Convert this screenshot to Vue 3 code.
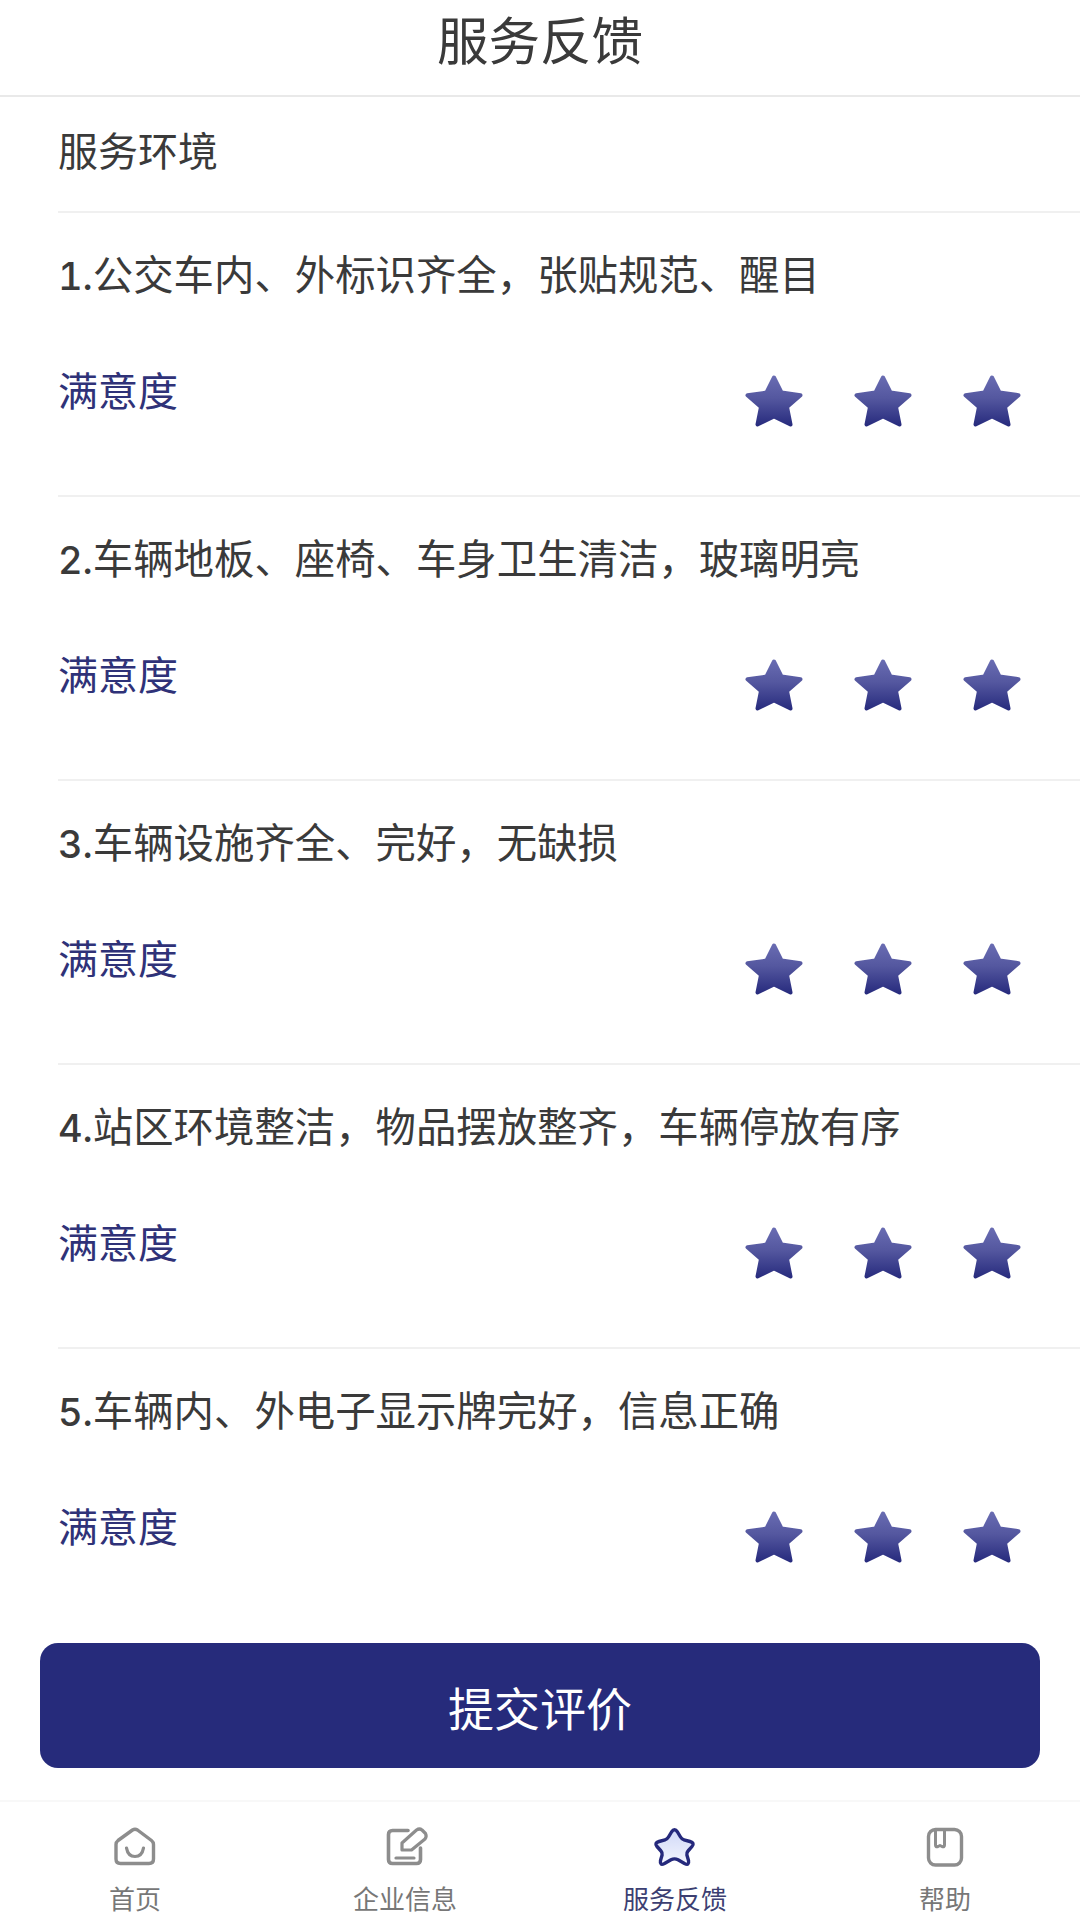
<script setup>
const rows = [
  '公交车内、外标识齐全，张贴规范、醒目',
  '车辆地板、座椅、车身卫生清洁，玻璃明亮',
  '车辆设施齐全、完好，无缺损',
  '站区环境整洁，物品摆放整齐，车辆停放有序',
  '车辆内、外电子显示牌完好，信息正确'
]
const tabs = [
  { key: 'home', label: '首页' },
  { key: 'edit', label: '企业信息' },
  { key: 'star', label: '服务反馈', active: true },
  { key: 'book', label: '帮助' }
]
const stars = [1, 2, 3]
</script>

<template>
  <div class="page">
    <svg class="defs" width="0" height="0" aria-hidden="true">
      <defs>
        <linearGradient id="starFill" gradientUnits="userSpaceOnUse" x1="0" y1="0" x2="0" y2="52">
          <stop offset="0" stop-color="#6a6db3" />
          <stop offset="0.45" stop-color="#54579f" />
          <stop offset="1" stop-color="#25297c" />
        </linearGradient>
        <linearGradient id="tabStarFill" x1="0" y1="0" x2="0" y2="1">
          <stop offset="0" stop-color="#d0d8f7" />
          <stop offset="1" stop-color="#f3f5fe" />
        </linearGradient>
      </defs>
    </svg>
    <header class="header">服务反馈</header>
    <main class="content">
      <div class="section">服务环境</div>
      <section v-for="(row, i) in rows" :key="i" class="row" :class="{ last: i === rows.length - 1 }">
        <div class="question"><span class="num">{{ i + 1 }}.</span>{{ row }}</div>
        <div class="rate">
          <span class="rate-label">满意度</span>
          <div class="stars">
            <svg v-for="s in stars" :key="s" class="star" viewBox="0 0 58 52">
              <path
                d="M29 2.5 L36.6 17.6 L55.5 20.2 L42 32 L45.5 49.5 L29 41.5 L12.5 49.5 L16 32 L2.5 20.2 L21.4 17.6 Z"
                fill="url(#starFill)"
                stroke="url(#starFill)"
                stroke-width="4"
                stroke-linejoin="round"
              />
            </svg>
          </div>
        </div>
      </section>
      <button class="submit" type="button">提交评价</button>
    </main>
    <nav class="tabbar">
      <div v-for="t in tabs" :key="t.key" class="tab" :class="{ active: t.active }">
        <svg class="tab-icon" viewBox="0 0 44 40" fill="none">
          <template v-if="t.key === 'home'">
            <path d="M5 14.5 L19.5 4 Q22 2.4 24.5 4 L38.5 14.5 Q40.5 16 40.5 18.5 V33 Q40.5 37.5 36 37.5 H7.5 Q3 37.5 3 33 V18.5 Q3 16 5 14.5 Z" stroke="#8d8d8d" stroke-width="3.4" stroke-linejoin="round" />
            <path d="M13.5 22 Q15 30.5 22 30.5 Q29 30.5 30.5 22" stroke="#8d8d8d" stroke-width="3.2" stroke-linecap="round" />
          </template>
          <template v-else-if="t.key === 'edit'">
            <path d="M25 4.5 H9.5 Q5.5 4.5 5.5 8.5 V33.5 Q5.5 37.5 9.5 37.5 H33.5 Q37.5 37.5 37.5 33.5 V22" stroke="#8d8d8d" stroke-width="3.6" stroke-linecap="round" />
            <path d="M19 24 V17 L33.5 4 Q36.5 2 39 4 L42.5 7.5 Q44 10.5 42 13 L28.5 24 Z" stroke="#8d8d8d" stroke-width="3.2" stroke-linejoin="round" />
            <path d="M13 32 H31" stroke="#8d8d8d" stroke-width="3.2" stroke-linecap="round" />
          </template>
          <template v-else-if="t.key === 'star'">
            <path d="M18.5 6 Q21.5 1.5 24.5 6 L27.5 11 Q28.8 13.2 31 13.8 L37 15.5 Q42 17 39 20.5 L35 25 Q33.5 26.6 33.9 29 L35.5 34.5 Q36.5 40 31.5 37.5 L25 33.8 Q21.5 32 18 33.8 L11.5 37.5 Q6.5 40 7.5 34.5 L9.1 29 Q9.5 26.6 8 25 L4 20.5 Q1 17 6 15.5 L12 13.8 Q14.2 13.2 15.5 11 Z" fill="url(#tabStarFill)" stroke="#25297c" stroke-width="3.4" stroke-linejoin="round" />
          </template>
          <template v-else>
            <rect x="5.5" y="3.5" width="33" height="35.5" rx="7" stroke="#8d8d8d" stroke-width="3.4" />
            <path d="M12.5 4 V19 Q12.5 21.5 15 20.5 L17 19.5 L19 20.5 Q21.5 21.5 21.5 19 V4" stroke="#8d8d8d" stroke-width="3" stroke-linejoin="round" />
          </template>
        </svg>
        <span class="tab-label">{{ t.label }}</span>
      </div>
    </nav>
  </div>
</template>

<style scoped>
.page {
  width: 1080px;
  height: 1920px;
  display: flex;
  flex-direction: column;
  background: #fff;
  overflow: hidden;
  color: #3a3a3a;
  font-family: "Noto Sans CJK SC", "Noto Sans", sans-serif;
}
.defs {
  position: absolute;
}
.header {
  height: 95px;
  line-height: 75px;
  text-align: center;
  font-size: 51.5px;
  border-bottom: 2px solid #e9e9e9;
  flex: none;
}
.content {
  flex: 1;
  display: flex;
  flex-direction: column;
  min-height: 0;
}
.section {
  margin-left: 58px;
  padding: 30px 0 40px;
  font-size: 40px;
  line-height: 44px;
  border-bottom: 2px solid #f0f0f0;
}
.row {
  margin-left: 58px;
  padding: 38px 0 68px;
  border-bottom: 2px solid #f0f0f0;
}
.row.last {
  border-bottom: 0;
}
.question {
  font-size: 40.4px;
  line-height: 44px;
}
.num {
  font-family: Inter, "Liberation Sans", sans-serif;
  font-weight: 500;
  font-size: 38px;
  line-height: 1;
  font-variant-numeric: tabular-nums;
}
.rate {
  display: flex;
  justify-content: space-between;
  align-items: flex-start;
  margin-top: 72px;
  padding-right: 59px;
}
.rate-label {
  font-size: 40px;
  line-height: 44px;
  color: #2f3278;
}
.stars {
  display: flex;
  gap: 51px;
  padding-top: 8px;
}
.star {
  width: 58px;
  height: 52px;
  display: block;
}
.submit {
  margin: 12px 40px 0;
  height: 125px;
  border: 0;
  border-radius: 18px;
  background: #262b7b;
  color: #fff;
  font-family: inherit;
  font-size: 46px;
  flex: none;
}
.tabbar {
  flex: none;
  box-sizing: border-box;
  display: grid;
  grid-template-columns: repeat(4, 1fr);
  height: 120px;
  border-top: 2px solid #f8f8f8;
}
.tab {
  display: flex;
  flex-direction: column;
  align-items: center;
  padding-top: 24px;
  color: #777;
}
.tab.active {
  color: #3c3f72;
}
.tab-icon {
  width: 44px;
  height: 40px;
  display: block;
  overflow: visible;
}
.tab-label {
  font-size: 26px;
  line-height: 30px;
  margin-top: 17px;
}
</style>
